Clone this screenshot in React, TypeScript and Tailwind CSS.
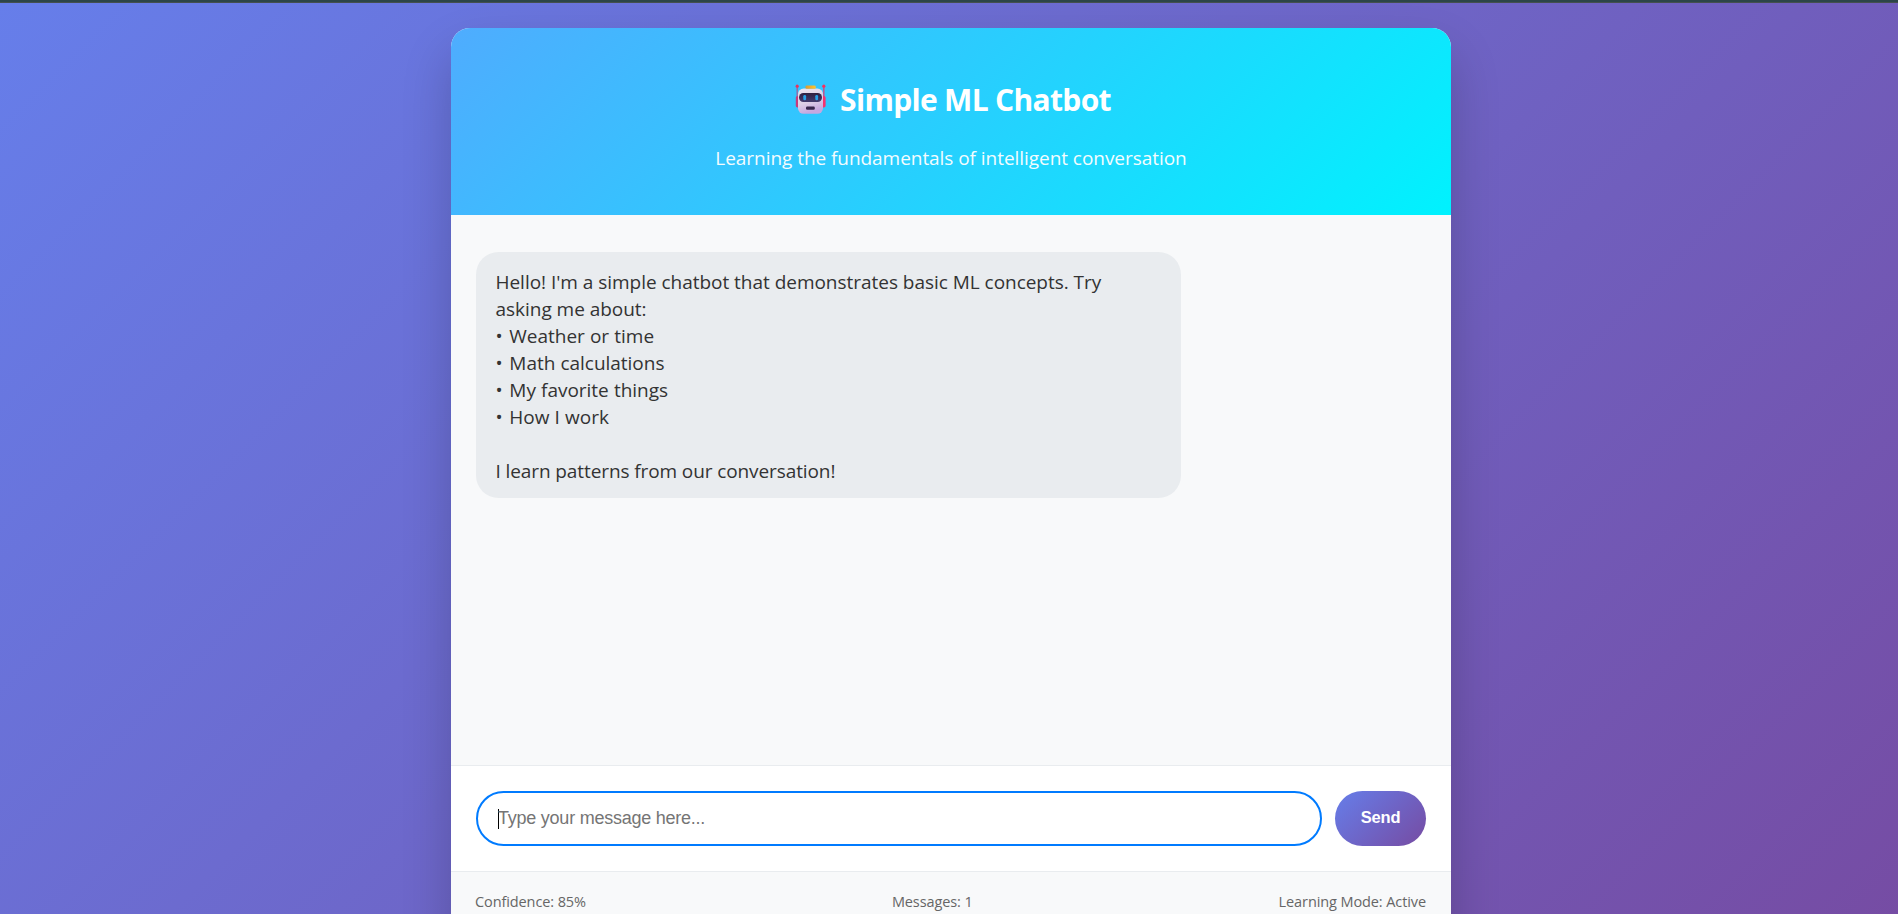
import React from "react";

const topics = ["Weather or time", "Math calculations", "My favorite things", "How I work"];

function RobotIcon() {
  return (
    <svg width="32" height="32" viewBox="0 0 32 32" className="mt-px shrink-0" aria-hidden="true">
      <defs>
        <linearGradient id="face" x1="0" y1="0" x2="0.3" y2="1">
          <stop offset="0" stopColor="#f0e4ee" />
          <stop offset="0.6" stopColor="#dccfe6" />
          <stop offset="1" stopColor="#c6a6e0" />
        </linearGradient>
        <linearGradient id="visor" x1="0" y1="0" x2="0" y2="1">
          <stop offset="0" stopColor="#30203f" />
          <stop offset="1" stopColor="#433b70" />
        </linearGradient>
        <linearGradient id="cap" x1="0" y1="0" x2="1" y2="0">
          <stop offset="0" stopColor="#dd9a35" />
          <stop offset="1" stopColor="#ffc52c" />
        </linearGradient>
      </defs>
      <rect x="1.6" y="1.5" width="1.1" height="13" fill="#b04f8e" />
      <rect x="28.3" y="1.5" width="1.1" height="13" fill="#ee2b68" />
      <circle cx="2.2" cy="2.2" r="1.6" fill="#e8355f" />
      <circle cx="28.8" cy="2.2" r="1.6" fill="#f92f60" />
      <rect x="0.8" y="12" width="4" height="11.5" rx="1.8" fill="#c83a7c" />
      <rect x="26.6" y="12" width="4" height="11.5" rx="1.8" fill="#f8316f" />
      <rect x="3" y="4.6" width="25" height="25.2" rx="5.6" fill="url(#face)" />
      <rect x="10.4" y="1.6" width="10.4" height="3.2" rx="1.4" fill="url(#cap)" />
      <rect x="4" y="9" width="23" height="9" rx="4.4" fill="url(#visor)" />
      <rect x="8.3" y="11" width="2.8" height="5.2" rx="1.3" fill="#27a0e6" />
      <rect x="20.3" y="11" width="2.8" height="5.2" rx="1.3" fill="#27a0e6" />
      <rect x="11" y="22.6" width="8.8" height="3.2" rx="1.2" fill="#37264e" />
    </svg>
  );
}

export default function App() {
  return (
    <div className="flex h-[914px] flex-col overflow-hidden font-['Open_Sans','Noto_Sans',sans-serif]">
      <div className="h-[3px] shrink-0 border-b border-[#44504f] bg-[#2c4548]" />
      <main className="flex flex-1 justify-center bg-linear-[135deg,#667eea_0%,#764ba2_100%] pt-[25px] pl-1">
        <div className="flex h-[960px] w-[1000px] shrink-0 flex-col overflow-hidden rounded-[19px] bg-white shadow-[0_25px_50px_rgba(0,0,0,0.2)]">
          <header className="flex h-[187px] shrink-0 flex-col items-center bg-linear-[135deg,#4facfe_0%,#00f2fe_100%] pt-[50px] text-white">
            <h1 className="flex h-[42px] items-center gap-[13px] pl-[4px] text-[30px] font-bold tracking-[-0.68px]">
              <RobotIcon />
              <span className="whitespace-nowrap">Simple ML Chatbot</span>
            </h1>
            <p className="mt-[25px] text-[19px] leading-[27px] tracking-[-0.05px] whitespace-nowrap opacity-95">Learning the fundamentals of intelligent conversation</p>
          </header>
          <section className="h-[550px] shrink-0 bg-[#f8f9fa] px-[25px] pt-[37px]">
            <div className="h-[246px] w-[705px] rounded-[22.5px] bg-[#e9ecef] pr-5 pl-[19.5px] pt-[16.5px] text-[19px] leading-[27px] tracking-[-0.03px] text-[#333]">
              <p className="whitespace-pre-line">{"Hello! I'm a simple chatbot that demonstrates basic ML concepts. Try\nasking me about:"}</p>
              {topics.map((topic) => (
                <p key={topic} className="[word-spacing:0.3px]">
                  <span className="mr-[1.5px]">•</span> {topic}
                </p>
              ))}
              <p className="mt-[27px] tracking-[-0.1px]">I learn patterns from our conversation!</p>
            </div>
          </section>
          <form className="flex h-[106px] shrink-0 items-center gap-[13px] border-t border-[#e9ecef] bg-white px-[25px]" onSubmit={(e) => e.preventDefault()}>
            <div className="flex h-[55px] flex-1 items-center rounded-full border-2 border-[#007bff] pl-5 font-['Liberation_Sans',sans-serif] text-[18px] tracking-[-0.24px] text-[#757575]">
              <span className="h-5 w-px bg-black" />
              <span className="-ml-px">Type your message here...</span>
            </div>
            <button className="h-[55px] w-[91px] rounded-full bg-linear-[135deg,#667eea_0%,#764ba2_100%] pb-0.5 font-['Liberation_Sans',sans-serif] text-[16.5px] font-bold tracking-[-0.2px] text-white">Send</button>
          </form>
          <footer className="flex flex-1 justify-between border-t border-[#e9ecef] bg-[#f8f9fa] px-[25px] pt-[19px] text-[14.5px] leading-[22px] tracking-[-0.1px] text-[#666]">
            <span className="-ml-px">Confidence: 85%</span>
            <span>Messages: 1</span>
            <span>Learning Mode: Active</span>
          </footer>
        </div>
      </main>
    </div>
  );
}
